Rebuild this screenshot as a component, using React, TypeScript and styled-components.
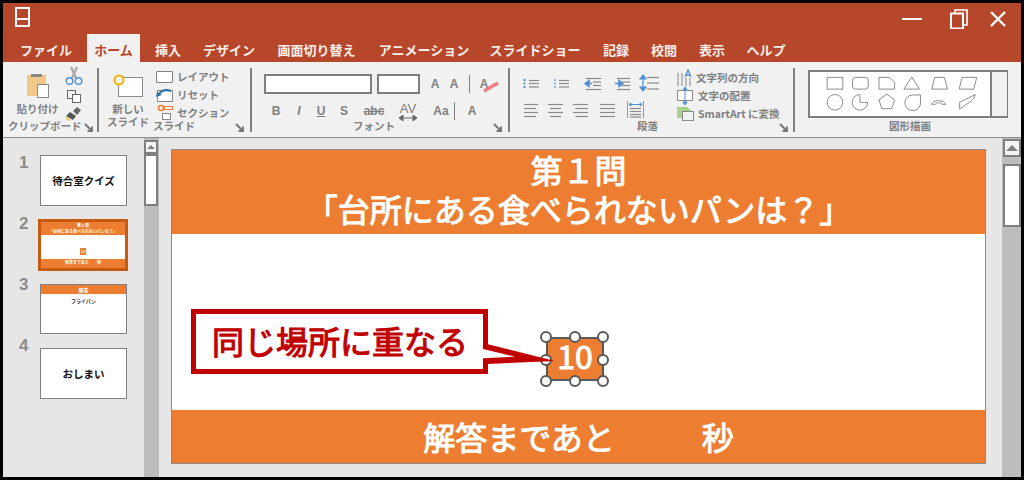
import React from "react";
import styled, { createGlobalStyle } from "styled-components";

const Global = createGlobalStyle`
  html, body { margin: 0; padding: 0; background: #000; }
  body { font-family: "Noto Sans CJK JP", "Liberation Sans", sans-serif; }
  #root { width: 1024px; height: 480px; overflow: hidden; }
`;

const FONT = `"Noto Sans CJK JP", "Liberation Sans", sans-serif`;
const GREY = "#7f7f7f";
const ORANGE = "#ed7d31";

const Frame = styled.div`
  width: 1024px; height: 480px; box-sizing: border-box;
  padding: 3px 3px 3px 3px; background: #000;
  display: flex; flex-direction: column; font-family: ${FONT};
`;

/* ---- title bar ---- */
const TitleBar = styled.div`
  height: 31px; background: #b7472a; flex: none;
  display: flex; align-items: center; padding: 0 12px; justify-content: space-between;
`;
const WindowControls = styled.div`
  display: flex; align-items: center; gap: 22px; padding-right: 0;
`;
const TabBar = styled.div`
  height: 28px; background: #b7472a; flex: none; display: flex; padding-left: 0;
`;
const Tab = styled.div<{ $w: number; $ml: number; $active?: boolean }>`
  width: ${p => p.$w}px; margin-left: ${p => p.$ml}px; flex: none;
  display: flex; align-items: center; justify-content: center;
  font-size: 13px; font-weight: 700; letter-spacing: 0;
  color: ${p => (p.$active ? "#b7472a" : "#fbeee9")};
  background: ${p => (p.$active ? "#f1f1f1" : "transparent")};
  white-space: nowrap; padding-top: 2px; box-sizing: border-box;
`;

/* ---- ribbon ---- */
const Ribbon = styled.div`
  height: 75px; flex: none; background: #f1f1f1; display: flex;
  border-bottom: 1px solid #8c8c8c; box-sizing: content-box;
  padding-top: 0;
`;
const Group = styled.div<{ $w: number }>`
  position: relative; width: ${p => p.$w}px; flex: none; height: 75px;
  box-sizing: border-box;
`;
const GroupInner = styled.div<{ $pl: number; $pt?: number; $gap?: number }>`
  display: flex; padding-left: ${p => p.$pl}px; padding-top: ${p => p.$pt ?? 4}px; gap: ${p => p.$gap ?? 0}px;
`;
const Sep = styled.div`
  width: 2px; height: 64px; margin-top: 6px; background: ${GREY}; flex: none;
`;
const GroupLabel = styled.div<{ $left: number; $top?: number }>`
  position: absolute; left: ${p => p.$left}px; top: ${p => p.$top ?? 58}px;
  font-size: 10.5px; line-height: 14px; font-weight: 700; color: ${GREY}; white-space: nowrap;
`;
const Launcher = styled.svg<{ $right: number }>`
  position: absolute; right: ${p => p.$right}px; top: 61px; width: 9px; height: 9px;
`;
const Small = styled.div`
  font-size: 10.5px; line-height: 14px; font-weight: 700; color: ${GREY}; white-space: nowrap;
`;
const BigButton = styled.div<{ $w: number }>`
  width: ${p => p.$w}px; display: flex; flex-direction: column; align-items: center; flex: none;
`;
const BigSpacer = styled.div<{ $h: number }>`
  height: ${p => p.$h}px; flex: none;
`;
const BigLabel = styled(Small)<{ $mt: number }>`
  text-align: center; line-height: 13px; font-size: 10.5px; margin-top: ${p => p.$mt}px;
`;
const IconColumn = styled.div<{ $gap: number; $pt?: number; $ml?: number; $start?: boolean }>`
  display: flex; flex-direction: column; gap: ${p => p.$gap}px;
  align-items: ${p => (p.$start ? "flex-start" : "center")};
  padding-top: ${p => p.$pt ?? 0}px; margin-left: ${p => p.$ml ?? 0}px;
`;
const MiniRow = styled.div<{ $h?: number }>`
  display: flex; align-items: center; gap: 4px; height: ${p => p.$h ?? 18}px;
`;
const MiniThumb = styled.div`
  width: 15px; height: 10px; border: 1px solid ${GREY}; background: #fff; border-radius: 1px;
`;
const FontRows = styled.div`
  display: flex; flex-direction: column; padding: 12px 0 0 12px; gap: 7px;
`;
const FontRow = styled.div`
  display: flex; align-items: center; height: 20px;
`;
const Field = styled.div<{ $w: number; $ml?: number }>`
  width: ${p => p.$w}px; height: 20px; margin-left: ${p => p.$ml ?? 0}px;
  box-sizing: border-box; border: 2px solid ${GREY}; background: #fff; flex: none;
`;
const FontGlyph = styled.span<{ $x: number; $w?: number; $u?: boolean; $i?: boolean; $s?: boolean }>`
  width: ${p => p.$w ?? 12}px; margin-left: ${p => p.$x}px; flex: none; text-align: center;
  font-family: "Liberation Sans", sans-serif; font-size: 12px; font-weight: 700; color: ${GREY};
  line-height: 18px; white-space: nowrap; display: block;
  font-style: ${p => (p.$i ? "italic" : "normal")};
  text-decoration: ${p => (p.$u ? "underline" : p.$s ? "line-through" : "none")};
`;
const VBar = styled.div<{ $ml: number; $h: number }>`
  width: 1px; height: ${p => p.$h}px; margin-left: ${p => p.$ml}px; background: ${GREY}; flex: none;
`;
const CharSpacing = styled.span`
  position: relative; display: block; width: 24px; margin-left: 10px; flex: none; text-align: center;
  font-family: "Liberation Sans", sans-serif; font-size: 13px; font-weight: 400; color: ${GREY}; line-height: 16px;
  transform: translateY(-2px);
`;
const SpacingArrow = styled.svg`
  position: absolute; left: 2px; top: 14px; width: 20px; height: 6px;
`;
const EraserBox = styled.span`
  position: relative; display: block; width: 20px; height: 18px; margin-left: 7px; flex: none;
`;
const EraserStroke = styled.svg`
  position: absolute; left: 6px; top: 6px; width: 18px; height: 12px;
`;
const ParaIcons = styled.div`
  display: flex; flex-direction: column; padding: 12px 0 0 13px; gap: 9px;
`;
const ParaRow = styled.div`
  display: flex; align-items: center; height: 18px;
`;
const TextCmds = styled.div`
  display: flex; flex-direction: column; padding: 7px 0 0 0; gap: 1px; margin-left: 8px;
`;
const Gallery = styled.div`
  margin: 8px 0 0 13px; width: 200px; height: 48px; box-sizing: border-box;
  border: 2px solid ${GREY}; background: #fff; display: flex;
`;
const GalleryShapes = styled.div`
  flex: 1; display: flex; align-items: center; justify-content: flex-start;
`;
const GalleryScroll = styled.div`
  width: 15px; background: #f1f1f1; border-left: 2px solid ${GREY}; flex: none;
`;

/* ---- body ---- */
const Body = styled.div`
  flex: 1; min-height: 0; display: flex; background: #e6e6e6;
`;
const ThumbPane = styled.div`
  width: 141px; flex: none; display: flex; flex-direction: column; padding-top: 17px; box-sizing: border-box;
`;
const ThumbRow = styled.div<{ $h: number }>`
  height: ${p => p.$h}px; display: flex; flex: none;
`;
const ThumbNo = styled.div<{ $shift: number }>`
  width: 37px; height: 18px; flex: none; padding-left: 16px; box-sizing: border-box; margin-top: ${p => p.$shift}px;
  font-family: "Liberation Sans", sans-serif; font-size: 17px; font-weight: 700; color: #8c8c8c; line-height: 18px;
`;
const Thumb = styled.div<{ $sel?: boolean; $h: number }>`
  width: ${p => (p.$sel ? 90 : 87)}px; height: ${p => p.$h}px; box-sizing: border-box; flex: none;
  margin-left: ${p => (p.$sel ? -2 : 0)}px;
  border: ${p => (p.$sel ? "3px solid #c55a11" : "1px solid #808080")};
  background: #fff; display: flex; flex-direction: column; font-weight: 500; color: #111;
`;
const ThumbCenter = styled.div`
  flex: 1; display: flex; align-items: center; justify-content: center; font-size: 10.5px; font-weight: 700;
  letter-spacing: 0;
`;
const ThumbBand = styled.div<{ $h: number }>`
  height: ${p => p.$h}px; background: ${ORANGE}; color: #fff; flex: none; text-align: center; font-weight: 700;
  font-size: 4px; line-height: 6px; white-space: nowrap; overflow: hidden;
`;
const ThumbTitle = styled(ThumbBand)`
  font-size: 5px; line-height: 9px;
`;
const ThumbMid = styled.div`
  flex: 1; display: flex; align-items: center; justify-content: center; padding-top: 9px; box-sizing: border-box;
`;
const ThumbChip = styled.div`
  width: 6px; height: 7px; background: ${ORANGE}; color: #fff; font-size: 4px; line-height: 7px; text-align: center;
`;
const ThumbSub = styled.div`
  font-size: 5px; line-height: 6px; text-align: center; color: #333; padding-top: 4px; font-weight: 700;
`;
const VScroll = styled.div<{ $w: number; $pl: number; $pr: number }>`
  width: ${p => p.$w}px; flex: none; background: #bdbdbd; display: flex; flex-direction: column;
  box-sizing: border-box; padding: 0 ${p => p.$pr}px 0 ${p => p.$pl}px;
`;
const ScrollBtn = styled.div<{ $h: number; $mt: number }>`
  height: ${p => p.$h}px; box-sizing: border-box; border: 2px solid ${GREY}; background: #f4f4f4; flex: none;
  display: flex; align-items: center; justify-content: center; margin-top: ${p => p.$mt}px;
`;
const ScrollArrow = styled.div<{ $s: number }>`
  width: 0; height: 0; border-left: ${p => p.$s}px solid transparent; border-right: ${p => p.$s}px solid transparent;
  border-bottom: ${p => p.$s}px solid #7f7f7f;
`;
const ScrollThumb = styled.div<{ $h: number; $mt: number }>`
  height: ${p => p.$h}px; margin-top: ${p => p.$mt}px; box-sizing: border-box; border: 2px solid ${GREY}; background: #fff; flex: none;
`;
const Stage = styled.div`
  flex: 1; display: flex; padding: 11px 16px 0 12px; box-sizing: border-box; min-width: 0;
`;
const Slide = styled.div`
  position: relative; width: 815px; height: 315px; box-sizing: border-box; border: 1px solid #8a8a8a;
  background: #fff; display: flex; flex-direction: column; flex: none;
`;
const SlideHead = styled.div`
  height: 84px; flex: none; background: ${ORANGE}; color: #fff; text-align: center;
  font-size: 32px; line-height: 39px; font-weight: 400; -webkit-text-stroke: 1px #fff;
  box-sizing: border-box; white-space: nowrap;
`;
const SlideMid = styled.div`
  flex: 1;
`;
const SlideFoot = styled.div`
  height: 53px; flex: none; background: ${ORANGE}; color: #fff; text-align: center;
  font-size: 32px; line-height: 53px; font-weight: 400; -webkit-text-stroke: 1px #fff; white-space: nowrap;
`;
const FootGap = styled.span`
  display: inline-block; width: 87px;
`;
const Callout = styled.div`
  position: absolute; left: 19px; top: 159px; width: 297px; height: 65px; box-sizing: border-box;
  border: 5px solid #c00000; background: #fff; color: #c00000;
  font-size: 32px; line-height: 52px; font-weight: 400; -webkit-text-stroke: 1.1px #c00000;
  padding-left: 16px; white-space: nowrap;
`;
const CalloutTail = styled.svg`
  position: absolute; left: 305px; top: 185px; width: 85px; height: 35px; overflow: visible;
`;
const Timer = styled.div`
  position: absolute; left: 374px; top: 187px; width: 58px; height: 44px; box-sizing: border-box;
  background: ${ORANGE}; border: 2px solid #595959; color: #fff;
  font-size: 32px; line-height: 32px; font-weight: 400; -webkit-text-stroke: 1px #fff;
  text-align: center; font-family: ${FONT};
`;
const Handle = styled.div<{ $x: number; $y: number }>`
  position: absolute; left: ${p => p.$x}px; top: ${p => p.$y}px; width: 12px; height: 12px; box-sizing: border-box;
  border: 2px solid #595959; background: #fff; border-radius: 50%;
`;

const sw = { fill: "none", stroke: "#8a8a8a", strokeWidth: 1 };

const LauncherIcon = ({ right }: { right: number }) => (
  <Launcher $right={right} viewBox="0 0 9 9">
    <path d="M1 1 L8 8 M8 3.5 V8 H3.5" fill="none" stroke="#777" strokeWidth="2" />
  </Launcher>
);

const AppIcon = () => (
  <svg width="15" height="20" viewBox="0 0 15 20" style={{ marginTop: -3 }}>
    <rect x="1" y="1" width="13" height="18" fill="none" stroke="#fff" strokeWidth="2" />
    <rect x="1" y="11" width="13" height="2" fill="#fff" />
  </svg>
);

const Paste = () => (
  <svg width="22" height="24" viewBox="0 0 22 24">
    <rect x="0" y="1" width="19" height="21" fill="#f0c987" />
    <rect x="4" y="0" width="11" height="3" fill="#888" />
    <rect x="10.5" y="10.5" width="11" height="13" fill="#fff" stroke="#8a8a8a" />
  </svg>
);
const Scissors = () => (
  <svg width="18" height="20" viewBox="0 0 18 20">
    <path d="M6 1 L11 12 M12 1 L7 12" stroke="#aaa" strokeWidth="2.4" fill="none" />
    <circle cx="4.5" cy="15" r="3.3" fill="none" stroke="#4f8fd0" strokeWidth="1.4" />
    <circle cx="13.5" cy="15" r="3.3" fill="none" stroke="#4f8fd0" strokeWidth="1.4" />
  </svg>
);
const CopyIcon = () => (
  <svg width="14" height="13" viewBox="0 0 14 13">
    <rect x="0.5" y="0.5" width="8" height="8" fill="#f1f1f1" stroke="#666" />
    <rect x="5.5" y="4.5" width="8" height="8" fill="#fff" stroke="#666" />
  </svg>
);
const BrushIcon = () => (
  <svg width="16" height="14" viewBox="0 0 16 14">
    <path d="M7 4 L11 0 L15 3 L11 8 Z" fill="#666" />
    <path d="M4 5 L10 9 L7 13 L0 9 Z" fill="#555" />
    <path d="M0 10 L5 13 L3 14 L0 12 Z" fill="#f2c94c" />
  </svg>
);
const NewSlide = () => (
  <svg width="30" height="24" viewBox="0 0 30 24">
    <rect x="5.5" y="3.5" width="24" height="19" fill="#fff" stroke="#8a8a8a" />
    <circle cx="6" cy="6" r="4.5" fill="#f1f1f1" stroke="#f2b100" strokeWidth="2" />
  </svg>
);
const ResetIcon = () => (
  <svg width="17" height="13" viewBox="0 0 17 13">
    <rect x="1.5" y="1.5" width="15" height="11" fill="#fff" stroke="#8a8a8a" />
    <path d="M15 2 C9 0 5 2 3 5" fill="none" stroke="#2e6da4" strokeWidth="2" />
    <path d="M0 8 L1 3 L6 6 Z" fill="#2e6da4" />
  </svg>
);
const SectionIcon = () => (
  <svg width="17" height="16" viewBox="0 0 17 16" style={{ marginTop: -2 }}>
    <circle cx="5" cy="4" r="2.6" fill="none" stroke="#ed7d31" strokeWidth="1.5" />
    <rect x="8.5" y="2.5" width="8" height="3" fill="#fff" stroke="#ed7d31" />
    <rect x="6.5" y="9.5" width="8" height="6" fill="#fff" stroke="#888" />
  </svg>
);
const FontEraser = () => (
  <EraserBox>
    <FontGlyph $x={0} $w={14}>A</FontGlyph>
    <EraserStroke viewBox="0 0 18 12">
      <path d="M1 10 L15 2" stroke="#ee7b86" strokeWidth="3.4" />
    </EraserStroke>
  </EraserBox>
);

const Lines = ({ x, w, ys }: { x: number; w: number; ys: number[] }) => (
  <>
    {ys.map(y => (
      <path key={y} d={`M${x} ${y}H${x + w}`} stroke="#8a8a8a" strokeWidth="1.2" fill="none" />
    ))}
  </>
);

const ParaTop = () => (
  <svg width="146" height="18" viewBox="0 0 146 18">
    <path d="M0.5 5h2v2h-2zM0.5 8.5h2v2h-2zM0.5 12h2v2h-2z" fill="#4f8fd0" />
    <Lines x={6} w={10} ys={[6.5, 9.5, 13]} />
    <path d="M31 5h2v2h-2zM31 8.5h2v2h-2zM31 12h2v2h-2z" fill="#8fbce6" />
    <Lines x={36} w={10} ys={[6.5, 9.5, 13]} />
    <path d="M62 9.5l4-3v6zM65 9.5h4" stroke="#4f8fd0" strokeWidth="1.4" fill="#4f8fd0" />
    <Lines x={63} w={15} ys={[4.5, 15.5]} /><Lines x={70} w={8} ys={[8, 11.5]} />
    <path d="M92 9.5h5M100 9.5l-4-3v6z" stroke="#4f8fd0" strokeWidth="1.4" fill="#4f8fd0" />
    <Lines x={94} w={13} ys={[4.5, 15.5]} /><Lines x={99} w={8} ys={[8, 11.5]} />
    <path d="M120 1l-3 4h6zM120 17l-3-4h6zM120 4v10" stroke="#4f8fd0" strokeWidth="1.2" fill="#4f8fd0" />
    <Lines x={124} w={12} ys={[3.5, 9, 15]} />
  </svg>
);
const ParaBottom = () => (
  <svg width="146" height="18" viewBox="0 0 146 18">
    <Lines x={1} w={14} ys={[3.5, 11.5]} /><Lines x={1} w={12} ys={[7.5, 15.5]} />
    <Lines x={25} w={15} ys={[3.5, 11.5]} /><Lines x={27} w={11} ys={[7.5, 15.5]} />
    <Lines x={50} w={15} ys={[3.5, 11.5]} /><Lines x={52.5} w={12.5} ys={[7.5, 15.5]} />
    <Lines x={77} w={15} ys={[3.5, 7.5, 11.5, 15.5]} />
    <path d="M104.5 0v17M120.5 0v17" stroke="#6fa3d8" strokeWidth="1" />
    <path d="M106 3.5h13M106 3.5l2-1.5v3zM119 3.5l-2-1.5v3z" stroke="#4f8fd0" strokeWidth="1" fill="#4f8fd0" />
    <Lines x={107} w={11} ys={[7.5, 10.5, 13.5, 16]} />
  </svg>
);
const TextDir = () => (
  <svg width="15" height="18" viewBox="0 0 15 18">
    <path d="M1 4v13M5 4v13" stroke="#888" fill="none" /><path d="M9 9v8M13 9v8" stroke="#888" fill="none" />
    <path d="M8 8l3-7 3 7M9 6h4" stroke="#4f8fd0" strokeWidth="1.3" fill="none" />
  </svg>
);
const TextAlign = () => (
  <svg width="17" height="18" viewBox="0 0 17 18">
    <rect x="0.5" y="3.5" width="15" height="10" fill="#fff" stroke="#8a8a8a" />
    <path d="M8 0v17M8 0l-2 3h4zM8 18l-2-3h4z" stroke="#4f8fd0" fill="#4f8fd0" />
  </svg>
);
const SmartArt = () => (
  <svg width="17" height="14" viewBox="0 0 17 14">
    <path d="M0 0h10l4 3v8H0z" fill="#a9d18e" />
    <rect x="5.5" y="4.5" width="11" height="9" fill="#f1f1f1" stroke="#8a8a8a" />
  </svg>
);

const Shapes = () => (
  <svg width="180" height="44" viewBox="0 0 180 45">
    <rect x="15.5" y="5.5" width="16" height="12" {...sw} />
    <rect x="41.5" y="5.5" width="16" height="12" rx="3" {...sw} />
    <path d="M68.5 5.5h11l5 5v7h-16z" {...sw} />
    <path d="M102 5l8 12.5h-16z" {...sw} />
    <path d="M125.5 5.5h10l3 12h-16z" {...sw} />
    <path d="M153.5 5.5h15l-3 12h-15z" {...sw} />
    <circle cx="23.5" cy="31" r="8" {...sw} />
    <path d="M49 23a8 8 0 1 0 8 8h-8z" {...sw} />
    <path d="M76.5 22.5l8 6-3 9h-10l-3-9z" {...sw} />
    <path d="M111 23.5v8a8 8 0 1 1-8-8z" {...sw} />
    <path d="M122 33a8 6 0 0 1 15 0h-4a4 3 0 0 0-7 0z" {...sw} />
    <path d="M151 38v-7l16-8c-1 4-3 6-6 8z" {...sw} />
  </svg>
);

const handles = [[368, 181], [397, 181], [425, 181], [368, 204], [425, 204], [368, 225], [397, 225], [425, 225]];

const App = () => (
  <Frame>
    <Global />
    <TitleBar>
      <AppIcon />
      <WindowControls>
        <svg width="20" height="2" viewBox="0 0 20 2"><rect width="20" height="2" fill="#fff" /></svg>
        <svg width="18" height="20" viewBox="0 0 18 20" style={{ marginLeft: 6 }}>
          <path d="M5 4V1h12v15h-4" fill="none" stroke="#fff" strokeWidth="1.6" />
          <rect x="1" y="4.5" width="12" height="15" fill="none" stroke="#fff" strokeWidth="2" />
        </svg>
        <svg width="16" height="16" viewBox="0 0 16 16" style={{ marginRight: 3 }}>
          <path d="M1 1L15 15M15 1L1 15" stroke="#fff" strokeWidth="2.4" />
        </svg>
      </WindowControls>
    </TitleBar>
    <TabBar>
      <Tab $ml={17} $w={52}>ファイル</Tab>
      <Tab $ml={15} $w={53} $active>ホーム</Tab>
      <Tab $ml={15} $w={26}>挿入</Tab>
      <Tab $ml={22} $w={52}>デザイン</Tab>
      <Tab $ml={22} $w={79}>画面切り替え</Tab>
      <Tab $ml={22} $w={92}>アニメーション</Tab>
      <Tab $ml={19} $w={92}>スライドショー</Tab>
      <Tab $ml={22} $w={26}>記録</Tab>
      <Tab $ml={22} $w={26}>校閲</Tab>
      <Tab $ml={22} $w={26}>表示</Tab>
      <Tab $ml={22} $w={38}>ヘルプ</Tab>
    </TabBar>
    <Ribbon>
      <Group $w={94}>
        <GroupInner $pl={7}>
          <BigButton $w={55}>
            <BigSpacer $h={8} />
            <Paste />
            <BigLabel $mt={4}>貼り付け</BigLabel>
          </BigButton>
          <IconColumn $gap={4}>
            <Scissors />
            <CopyIcon />
            <BrushIcon />
          </IconColumn>
        </GroupInner>
        <GroupLabel $left={5} $top={57}>クリップボード</GroupLabel>
        <LauncherIcon right={4} />
      </Group>
      <Sep />
      <Group $w={151}>
        <GroupInner $pl={8}>
          <BigButton $w={42}>
            <BigSpacer $h={8} />
            <NewSlide />
            <BigLabel $mt={4}>新しい<br />スライド</BigLabel>
          </BigButton>
          <IconColumn $gap={0} $start $ml={7} $pt={2}>
            <MiniRow><MiniThumb /><Small>レイアウト</Small></MiniRow>
            <MiniRow><ResetIcon /><Small>リセット</Small></MiniRow>
            <MiniRow><SectionIcon /><Small>セクション</Small></MiniRow>
          </IconColumn>
        </GroupInner>
        <GroupLabel $left={54} $top={57}>スライド</GroupLabel>
        <LauncherIcon right={6} />
      </Group>
      <Sep />
      <Group $w={256}>
        <FontRows>
          <FontRow>
            <Field $w={108} />
            <Field $w={43} $ml={5} />
            <FontGlyph $x={9}>A</FontGlyph>
            <FontGlyph $x={7}>A</FontGlyph>
            <VBar $ml={9} $h={18} />
            <FontEraser />
          </FontRow>
          <FontRow>
            <FontGlyph $x={6}>B</FontGlyph>
            <FontGlyph $x={11} $i>I</FontGlyph>
            <FontGlyph $x={10} $u>U</FontGlyph>
            <FontGlyph $x={11}>S</FontGlyph>
            <FontGlyph $x={12} $w={24} $s>abc</FontGlyph>
            <CharSpacing>
              AV
              <SpacingArrow viewBox="0 0 20 6">
                <path d="M1 3h18M1 3l4-3v6zM19 3l-4-3v6z" stroke="#666" fill="#666" />
              </SpacingArrow>
            </CharSpacing>
            <FontGlyph $x={13} $w={16}>Aa</FontGlyph>
            <VBar $ml={5} $h={18} />
            <FontGlyph $x={11}>A</FontGlyph>
          </FontRow>
        </FontRows>
        <GroupLabel $left={101} $top={57}>フォント</GroupLabel>
        <LauncherIcon right={6} />
      </Group>
      <Sep />
      <Group $w={283}>
        <GroupInner $pl={0} $pt={0}>
          <ParaIcons>
            <ParaRow><ParaTop /></ParaRow>
            <ParaRow><ParaBottom /></ParaRow>
          </ParaIcons>
          <TextCmds>
            <MiniRow $h={17}><TextDir /><Small>文字列の方向</Small></MiniRow>
            <MiniRow $h={17}><TextAlign /><Small>文字の配置</Small></MiniRow>
            <MiniRow $h={17}><SmartArt /><Small>SmartArt に変換</Small></MiniRow>
          </TextCmds>
        </GroupInner>
        <GroupLabel $left={127} $top={57}>段落</GroupLabel>
        <LauncherIcon right={5} />
      </Group>
      <Sep />
      <Group $w={226}>
        <Gallery>
          <GalleryShapes><Shapes /></GalleryShapes>
          <GalleryScroll />
        </Gallery>
        <GroupLabel $left={94} $top={57}>図形描画</GroupLabel>
      </Group>
    </Ribbon>
    <Body>
      <ThumbPane>
        <ThumbRow $h={64}>
          <ThumbNo $shift={-1}>1</ThumbNo>
          <Thumb $h={51}><ThumbCenter>待合室クイズ</ThumbCenter></Thumb>
        </ThumbRow>
        <ThumbRow $h={65}>
          <ThumbNo $shift={-4}>2</ThumbNo>
          <Thumb $sel $h={52}>
            <ThumbBand $h={13}>第１問<br />「台所にある食べられないパンは？」</ThumbBand>
            <ThumbMid><ThumbChip>10</ThumbChip></ThumbMid>
            <ThumbBand $h={9}>解答まであと　　秒</ThumbBand>
          </Thumb>
        </ThumbRow>
        <ThumbRow $h={64}>
          <ThumbNo $shift={-8}>3</ThumbNo>
          <Thumb $h={50}>
            <ThumbTitle $h={9}>解答</ThumbTitle>
            <ThumbSub>フライパン</ThumbSub>
          </Thumb>
        </ThumbRow>
        <ThumbRow $h={60}>
          <ThumbNo $shift={-11}>4</ThumbNo>
          <Thumb $h={51}><ThumbCenter>おしまい</ThumbCenter></Thumb>
        </ThumbRow>
      </ThumbPane>
      <VScroll $w={15} $pl={0} $pr={1}>
        <ScrollBtn $h={14} $mt={2}><ScrollArrow $s={4} /></ScrollBtn>
        <ScrollThumb $h={52} $mt={0} />
      </VScroll>
      <Stage>
        <Slide>
          <SlideHead>第１問<br />「台所にある食べられないパンは？」</SlideHead>
          <SlideMid />
          <SlideFoot>解答まであと<FootGap />秒</SlideFoot>
          <Callout>同じ場所に重なる</Callout>
          <Timer>10</Timer>
          {handles.map(([x, y]) => (
            <Handle key={`${x}-${y}`} $x={x} $y={y} />
          ))}
          <CalloutTail viewBox="0 0 85 35">
            <path d="M10 9 L78 26 L10 29 Z" fill="#c00000" />
            <path d="M6 14 L38 21.7 L6 23.3 Z" fill="#fff" />
          </CalloutTail>
        </Slide>
      </Stage>
      <VScroll $w={19} $pl={1} $pr={0}>
        <ScrollBtn $h={18} $mt={1}><ScrollArrow $s={6} /></ScrollBtn>
        <ScrollThumb $h={63} $mt={7} />
      </VScroll>
    </Body>
  </Frame>
);

export default App;
